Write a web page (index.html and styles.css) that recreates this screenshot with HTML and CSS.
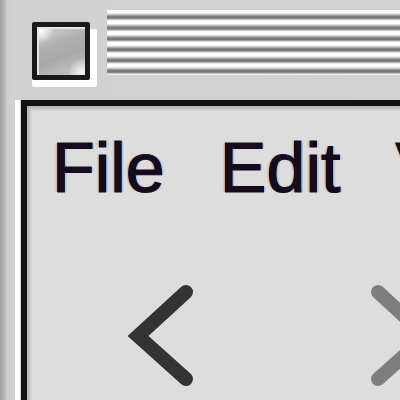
FILE: index.html
```html
<!DOCTYPE html>
<html lang="en">
<head>
<meta charset="utf-8">
<title>Window</title>
<link rel="stylesheet" href="styles.css">
</head>
<body>
<div class="window">
  <div class="titlebar">
    <button class="closebox" aria-label="Close"></button>
    <div class="stripes"></div>
  </div>
  <div class="frame">
    <div class="content">
      <nav class="menu">
        <span class="menu-item">File</span>
        <span class="menu-item">Edit</span>
        <span class="menu-item">View</span>
      </nav>
      <div class="arrows">
        <svg class="arrow arrow-back" width="70" height="110" viewBox="0 0 70 110" aria-label="Back">
          <path d="M59 13 L11 57 L59 100" />
        </svg>
        <svg class="arrow arrow-forward" width="70" height="110" viewBox="0 0 70 110" aria-label="Forward">
          <path d="M11 13 L59 57 L11 100" />
        </svg>
      </div>
    </div>
  </div>
</div>
</body>
</html>
```
FILE: styles.css
```css
html, body {
  margin: 0;
  padding: 0;
  width: 400px;
  height: 400px;
  overflow: hidden;
}

.window {
  width: 400px;
  height: 400px;
  background: linear-gradient(to right, #9e9e9e 0, #b4b4b4 4px, #cecece 7px, #d1d1d1 12px, #d2d2d2 100%);
  display: flex;
  flex-direction: column;
}

.titlebar {
  height: 100px;
  display: flex;
  align-items: flex-start;
  flex: none;
}

.closebox {
  margin: 22px 0 0 32px;
  width: 58px;
  height: 58px;
  padding: 0;
  box-sizing: border-box;
  border: 5px solid #1a1a1a;
  border-radius: 2px;
  background:
    radial-gradient(circle at 6% 6%, #ffffff 0, rgba(255,255,255,0) 22%),
    radial-gradient(circle at 94% 94%, #f4f4f4 0, rgba(255,255,255,0) 22%),
    linear-gradient(160deg, #d8d8d8 0, #b0b0b0 35%, #a9a9a9 60%, #c9c9c9 100%);
  box-shadow: inset 2px 2px 0 #e6e6e6, 7px 7px 0 #ffffff, 0 7px 0 #ffffff;
  flex: none;
}

.stripes {
  margin: 10px 0 0 17px;
  flex: 1;
  height: 65px;
  background: repeating-linear-gradient(to bottom,
    #ffffff 0, #ffffff 2.8px,
    #c9c9c9 4.4px, #7a7a7a 6.4px,
    #7a7a7a 8.2px, #c9c9c9 9.6px,
    #ffffff 10.8px);
}

.frame {
  flex: 1;
  margin-left: 15px;
  border-left: 5px solid #ffffff;
  display: flex;
}

.content {
  flex: 1;
  margin-left: 1px;
  border-top: 6px solid #111111;
  border-left: 6px solid #111111;
  background: #dddddd;
  box-shadow: inset 3px 3px 3px rgba(0, 0, 0, 0.18);
  overflow: hidden;
}

.menu {
  display: flex;
  gap: 55px;
  padding: 27px 0 0 25px;
  height: 70px;
  white-space: nowrap;
  font-family: "Liberation Sans", Arial, sans-serif;
  font-size: 70px;
  line-height: 70px;
  color: #140c1c;
}

.menu-item {
  -webkit-text-stroke: 1.2px #140c1c;
  text-shadow: -2px 0 1px rgba(220, 140, 40, 0.45), 2px 0 1px rgba(60, 160, 255, 0.45);
  filter: blur(0.4px);
}

.arrows {
  display: flex;
  gap: 170px;
  margin-top: 76px;
  padding-left: 100px;
}

.arrow {
  flex: none;
  display: block;
}

.arrow path {
  fill: none;
  stroke-width: 14;
  stroke-linecap: round;
  stroke-linejoin: miter;
}

.arrow-back path {
  stroke: #333333;
}

.arrow-forward path {
  stroke: #7e7e7e;
}
```
